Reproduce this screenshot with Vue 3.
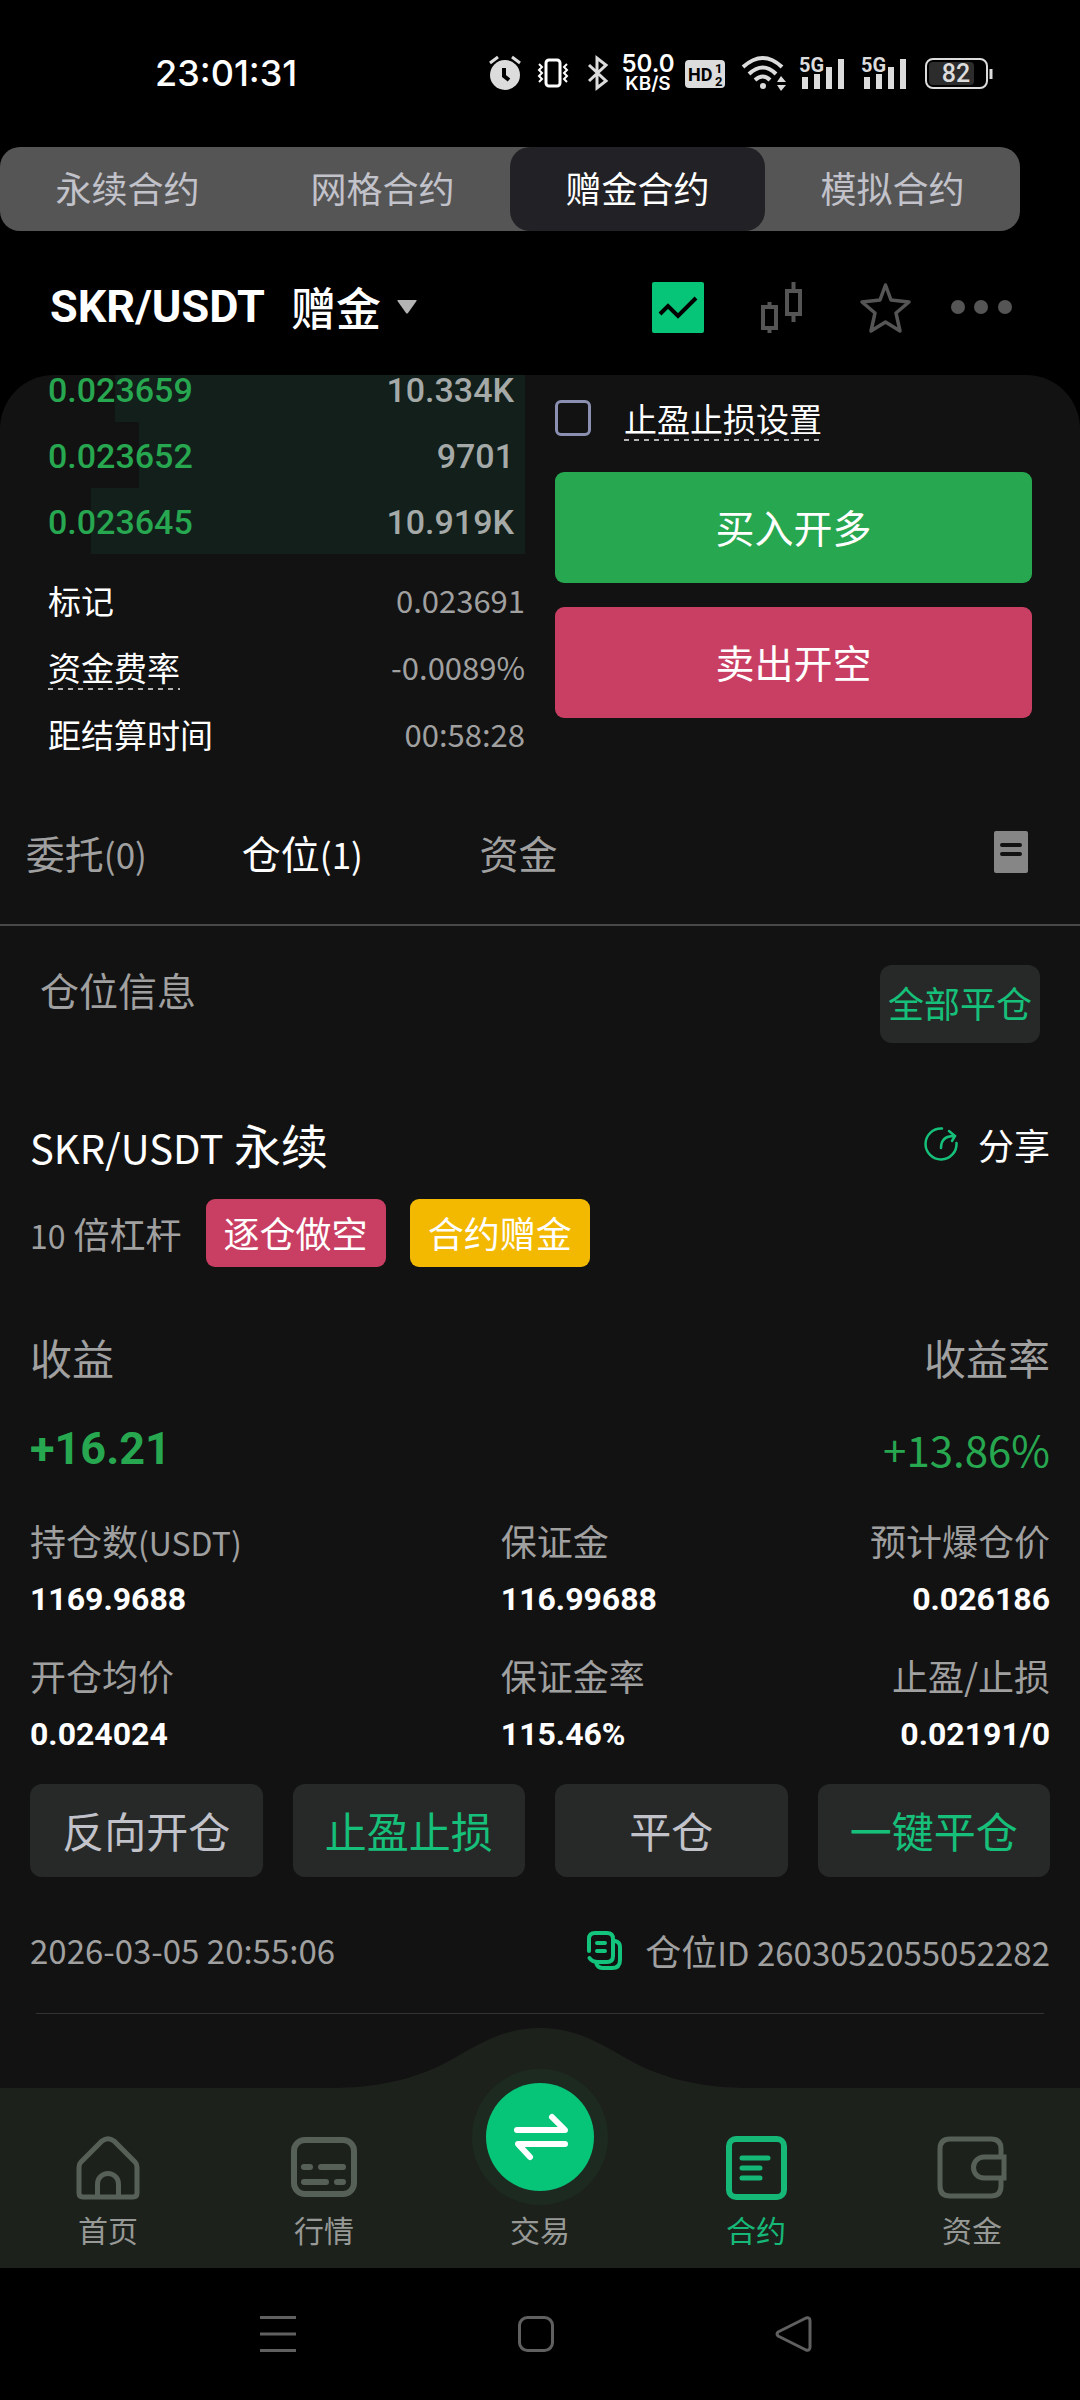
<template>
    <div class="app">
        <!-- Phone status bar -->
        <div class="status-bar">
            <span class="clock">23:01:31</span>
            <div class="status-icons">
                <svg width="32" height="34" viewBox="0 0 32 34">
                    <circle cx="16" cy="19" r="15" fill="#dcdcdc" />
                    <path d="M1 7 9 1M31 7 23 1" stroke="#dcdcdc" stroke-width="3" />
                    <path d="M15 12V20L20 24" fill="none" stroke="#000" stroke-width="4" />
                </svg>
                <svg width="36" height="34" viewBox="0 0 36 34" fill="none" stroke="#fff">
                    <rect x="11" y="4" width="14" height="26" rx="3" stroke-width="3" />
                    <path d="M4 8 7 11 4 14 7 17 4 20 7 23 4 26M32 8 29 11 32 14 29 17 32 20 29 23 32 26" stroke-width="2" />
                </svg>
                <svg width="26" height="34" viewBox="0 0 26 34" fill="none" stroke="#dcdcdc" stroke-width="3">
                    <path d="M4 9 21 25 12 32V2L21 9 4 25" />
                </svg>
                <div class="speed">
                    <span class="speed-value">50.0</span>
                    <span class="speed-unit">KB/S</span>
                </div>
                <svg width="40" height="34" viewBox="0 0 40 34">
                    <rect x="0" y="4" width="40" height="28" rx="4" fill="#dcdcdc" />
                    <text x="3" y="25" class="hd-text">HD</text>
                    <text x="30" y="17" class="hd-small">1</text>
                    <text x="30" y="30" class="hd-small">2</text>
                </svg>
                <svg width="46" height="36" viewBox="0 0 46 36" fill="none" stroke="#dcdcdc" stroke-width="4">
                    <path d="M4 12Q24-6 43 12M10 19Q24 6 37 19M16 25Q24 18 31 25" />
                    <circle cx="24" cy="31" r="3" fill="#dcdcdc" stroke="none" />
                    <path d="M38 27 42 21 47 27ZM38 30H47L42 36Z" fill="#dcdcdc" stroke="none" />
                </svg>
                <svg v-for="n in 2" :key="n" width="48" height="34" viewBox="0 0 48 34">
                    <text x="0" y="16" class="net-text">5G</text>
                    <path d="M6 21V33M18 18V33M30 11V33M42 3V33" stroke="#dcdcdc" stroke-width="6" />
                </svg>
                <svg width="70" height="34" viewBox="0 0 70 34">
                    <rect x="3" y="3" width="61" height="29" rx="7" fill="none" stroke="#dcdcdc" stroke-width="2" />
                    <rect x="6" y="6" width="45" height="23" rx="4" fill="#2c2c2c" />
                    <path d="M68 13V23" stroke="#dcdcdc" stroke-width="3" />
                    <text x="33" y="26" text-anchor="middle" class="battery-text">82</text>
                </svg>
            </div>
        </div>

        <!-- Contract type switch -->
        <div class="type-tabs">
            <button
                v-for="type in types"
                :key="type"
                class="type-tab"
                :class="{ active: type === currentType }"
                @click="currentType = type"
            >{{ type }}</button>
        </div>

        <header class="pair-header">
            <button class="pair">
                <span class="pair-name">SKR/USDT</span>
                <span class="pair-kind">赠金</span>
                <svg width="20" height="14" viewBox="0 0 20 14">
                    <path d="M1 0H19Q20 0 19.500 1L11 13Q10 14 9 13L.5 1Q0 0 1 0Z" fill="#b4b4b4" />
                </svg>
            </button>
            <div class="pair-tools">
                <button aria-label="走势">
                    <svg width="52" height="51" viewBox="0 0 52 51">
                        <rect width="52" height="51" rx="2" fill="#06c478" />
                        <path d="M8 32 16 24 26 34 44 16" fill="none" stroke="#000" stroke-width="4" />
                    </svg>
                </button>
                <button aria-label="K线">
                    <svg width="76" height="51" viewBox="-17 0 76 51" fill="none" stroke="#555" stroke-width="4">
                        <path d="M2 25H15V46H2ZM8.500 20V25M8.500 46V51M26 9H39V32H26ZM32.500 0V9M32.500 32V40" />
                    </svg>
                </button>
                <button aria-label="收藏">
                    <svg width="51" height="51" viewBox="0 0 51 51" fill="none" stroke="#555" stroke-width="3.500" stroke-linejoin="round">
                        <path d="M25.500 3 31 18 49 20 36 31 40 49 25.500 40 11 49 15 31 2 20 20 18Z" />
                    </svg>
                </button>
                <button aria-label="更多">
                    <svg width="61" height="51" viewBox="0 0 61 51" fill="#555">
                        <circle cx="7" cy="25" r="7" />
                        <circle cx="30" cy="25" r="7" />
                        <circle cx="54" cy="25" r="7" />
                    </svg>
                </button>
            </div>
        </header>

        <main class="panel">
            <section class="trade">
                <div class="trade-left">
                    <table class="book">
                        <tbody>
                            <tr v-for="row in bids" :key="row.price" :style="{ '--depth': row.depth }">
                                <td class="price">{{ row.price }}</td>
                                <td class="amount">{{ row.amount }}</td>
                            </tr>
                        </tbody>
                    </table>
                    <div class="market-info">
                        <div class="info-row" v-for="item in marketInfo" :key="item.label">
                            <span :class="{ dashed: item.hint }">{{ item.label }}</span>
                            <span class="info-value">{{ item.value }}</span>
                        </div>
                    </div>
                </div>
                <div class="trade-right">
                    <div class="tpsl">
                        <input id="tpsl" type="checkbox" v-model="tpsl" />
                        <label for="tpsl" class="dashed">止盈止损设置</label>
                    </div>
                    <button class="order-btn buy">买入开多</button>
                    <button class="order-btn sell">卖出开空</button>
                </div>
            </section>

            <div class="list-tabs">
                <button
                    v-for="(tab, index) in listTabs"
                    :key="tab.name"
                    class="list-tab"
                    :class="{ active: index === currentTab }"
                    @click="currentTab = index"
                >{{ tab.name }}<span v-if="tab.count" class="latin">{{ tab.count }}</span></button>
                <button class="history" aria-label="历史记录">
                    <svg width="34" height="42" viewBox="0 0 34 42">
                        <rect width="34" height="42" rx="2" fill="#868686" />
                        <path d="M8 14H26M8 23H26" stroke="#121212" stroke-width="4" stroke-linecap="round" />
                    </svg>
                </button>
            </div>

            <div class="list-head">
                <h2>仓位信息</h2>
                <button class="close-all">全部平仓</button>
            </div>

            <article class="position">
                <div class="position-title">
                    <h3><span class="latin">SKR/USDT</span> 永续</h3>
                    <button class="share">
                        <svg width="34" height="34" viewBox="0 0 34 34" fill="none" stroke="#16c07a" stroke-width="2.500" stroke-linecap="round">
                            <path d="M18 1.500A15.500 15.500 0 1 0 32.500 16M17 21C17 13 21 9 30 9M25 4 31 9 28 14" />
                        </svg>
                        分享
                    </button>
                </div>
                <div class="tags">
                    <span class="leverage"><span class="latin">10</span> 倍杠杆</span>
                    <span class="tag short">逐仓做空</span>
                    <span class="tag bonus">合约赠金</span>
                </div>

                <div class="profit-labels">
                    <span>收益</span>
                    <span>收益率</span>
                </div>
                <div class="profit-values">
                    <strong>+16.21</strong>
                    <span>+13.86%</span>
                </div>

                <div class="stats">
                    <div class="stat" v-for="stat in stats" :key="stat.label">
                        <div class="stat-label">{{ stat.label }}<span v-if="stat.unit" class="latin">{{ stat.unit }}</span></div>
                        <div class="stat-value">{{ stat.value }}</div>
                    </div>
                </div>

                <div class="actions">
                    <button>反向开仓</button>
                    <button class="green">止盈止损</button>
                    <button>平仓</button>
                    <button class="green">一键平仓</button>
                </div>

                <div class="position-foot">
                    <time class="latin">2026-03-05 20:55:06</time>
                    <div class="position-id">
                        <button aria-label="复制">
                            <svg width="35" height="39" viewBox="0 0 35 39" fill="none" stroke="#12c47c" stroke-width="4" stroke-linecap="round">
                                <path d="M2 20V8Q2 2 8 2H20Q26 2 26 8V25Q26 31 20 31H11Q5 31 2.500 27" />
                                <path d="M28 10Q33 11 33 16V29Q33 37 25 37H16Q11 37 9.500 33M10 12H18M10 20H18" />
                            </svg>
                        </button>
                        <span>仓位<span class="latin">ID 2603052055052282</span></span>
                    </div>
                </div>
            </article>
        </main>

        <nav class="bottom-nav">
            <svg class="nav-bg" viewBox="0 0 1080 240" preserveAspectRatio="none">
                <path d="M0 60H330C375 60 415 52 451 32C480 15 505 0 540 0C575 0 600 15 629 32C665 52 705 60 750 60H1080V240H0Z" fill="#1d211c" />
            </svg>
            <a href="#" class="nav-item">
                <svg width="64" height="64" viewBox="0 0 64 64" fill="none" stroke="#576056" stroke-width="5">
                    <path d="M3 31Q3 28 5 26L26 5Q32 .5 38 5L59 26Q61 28 61 31V57Q61 61 57 61H7Q3 61 3 57Z" />
                    <path d="M21.500 60V48A10.500 10.500 0 0 1 42.500 48V60" />
                </svg>
                首页
            </a>
            <a href="#" class="nav-item">
                <svg width="68" height="64" viewBox="0 0 68 64" fill="none" stroke="#576056" stroke-width="6">
                    <rect x="4" y="4" width="60" height="54" rx="11" />
                    <path d="M14 31H20M31 31H53M14 46H36M47 46H53" stroke-linecap="round" />
                </svg>
                行情
            </a>
            <a href="#" class="nav-item">
                <svg class="trade-icon" width="136" height="136" viewBox="0 0 136 136">
                    <circle cx="68" cy="68" r="68" fill="#1d2a1f" />
                    <circle cx="68" cy="68" r="54" fill="#06c478" />
                    <path d="M45 61H93L80 48M93 75H46L58 88" fill="none" stroke="#fff" stroke-width="6" stroke-linecap="round" stroke-linejoin="round" />
                </svg>
                交易
            </a>
            <a href="#" class="nav-item active">
                <svg width="62" height="64" viewBox="0 0 62 64" fill="none" stroke="#16b878" stroke-width="6">
                    <rect x="4" y="3" width="55" height="58" rx="7" />
                    <path d="M17 22H43M17 32H35M17 42H35" stroke-width="5" stroke-linecap="round" />
                </svg>
                合约
            </a>
            <a href="#" class="nav-item">
                <svg width="70" height="64" viewBox="0 0 70 64" fill="none" stroke="#576056" stroke-width="5">
                    <path d="M64 22V13Q64 3 54 3H13Q3 3 3 13V50Q3 60 13 60H54Q64 60 64 50V42" />
                    <path d="M67 21H47A10.500 10.500 0 0 0 47 42H67Z" />
                </svg>
                资金
            </a>
        </nav>

        <div class="system-nav">
            <button aria-label="菜单">
                <svg width="36" height="36" viewBox="0 0 36 36" stroke="#606060" stroke-width="3">
                    <path d="M0 1.500H36M0 18H36M0 34.500H36" />
                </svg>
            </button>
            <button aria-label="主页">
                <svg width="36" height="36" viewBox="0 0 36 36" fill="none" stroke="#606060" stroke-width="3">
                    <rect x="1.500" y="1.500" width="33" height="33" rx="8" />
                </svg>
            </button>
            <button aria-label="返回">
                <svg width="36" height="36" viewBox="0 0 36 36" fill="none" stroke="#606060" stroke-width="3" stroke-linejoin="round">
                    <path d="M2 16 30 2Q34 1 34 5V31Q34 35 30 34L2 20Q0 18 2 16Z" />
                </svg>
            </button>
        </div>
    </div>
</template>

<script setup>
import { ref } from "vue";

const types = ["永续合约", "网格合约", "赠金合约", "模拟合约"];
const currentType = ref("赠金合约");

const bids = ref([
    { price: "0.023659", amount: "10.334K", depth: "86%" },
    { price: "0.023652", amount: "9701", depth: "81%" },
    { price: "0.023645", amount: "10.919K", depth: "91%" }
]);

const marketInfo = ref([
    { label: "标记", value: "0.023691" },
    { label: "资金费率", value: "-0.0089%", hint: true },
    { label: "距结算时间", value: "00:58:28" }
]);

const tpsl = ref(false);

const listTabs = [
    { name: "委托", count: "(0)" },
    { name: "仓位", count: "(1)" },
    { name: "资金" }
];
const currentTab = ref(1);

const stats = ref([
    { label: "持仓数", unit: "(USDT)", value: "1169.9688" },
    { label: "保证金", value: "116.99688" },
    { label: "预计爆仓价", value: "0.026186" },
    { label: "开仓均价", value: "0.024024" },
    { label: "保证金率", value: "115.46%" },
    { label: "止盈/止损", value: "0.02191/0" }
]);
</script>

<style>
body {
    background: #000;
}
</style>

<style scoped>
.app {
    background: #000;
    color: #fff;
    font-family: "Noto Sans CJK SC", sans-serif;
    font-size: 36px;
}

button {
    padding: 0;
    border: none;
    background: none;
    color: inherit;
    font: inherit;
    cursor: pointer;
}

svg {
    display: block;
    flex-shrink: 0;
    overflow: visible;
}

h2, h3 {
    margin: 0;
    font-weight: 400;
}

.latin {
    font-size: 32px;
    line-height: 1;
}

/* Status bar */
.status-bar {
    display: flex;
    justify-content: space-between;
    align-items: center;
    height: 147px;
    padding: 0 87px 2px 155px;
    box-sizing: border-box;
    font-family: Inter, sans-serif;
}

.clock {
    font-size: 36px;
    font-weight: 500;
}

.status-icons {
    display: flex;
    align-items: center;
    gap: 14px;
}

.speed {
    display: flex;
    flex-direction: column;
    align-items: center;
    width: 46px;
    font-weight: 600;
}

.speed-value {
    font-size: 24px;
    line-height: 22px;
}

.speed-unit {
    font-size: 19px;
    line-height: 18px;
}

.hd-text {
    font: 700 18px Roboto, sans-serif;
}

.hd-small {
    font: 700 13px Roboto, sans-serif;
}

.net-text {
    font: 700 20px Roboto, sans-serif;
    fill: #dcdcdc;
}

.battery-text {
    font: 500 25px Roboto, sans-serif;
    fill: #dcdcdc;
}

/* Contract type switch */
.type-tabs {
    display: flex;
    margin-right: 60px;
    border-radius: 20px;
    background: #555;
}

.type-tab {
    flex: 1;
    height: 84px;
    padding-bottom: 4px;
    border-radius: 20px;
    color: #c2c2ca;
}

.type-tab.active {
    background: #222226;
    color: #fff;
}

/* Pair header */
.pair-header {
    display: flex;
    justify-content: space-between;
    align-items: center;
    height: 144px;
    padding: 8px 68px 0 50px;
    box-sizing: border-box;
}

.pair {
    display: flex;
    align-items: center;
    font-weight: 500;
}

.pair-name {
    font-family: Roboto, sans-serif;
    font-size: 45px;
    font-weight: 700;
    line-height: 60px;
}

.pair-kind {
    margin: 0 16px 0 26px;
    font-size: 45px;
    line-height: 60px;
}

.pair-tools {
    display: flex;
    align-items: center;
    gap: 40px;
}

.panel {
    overflow: hidden;
    padding-bottom: 14px;
    border-radius: 54px 54px 0 0;
    background: #121212;
}

/* Order book and order form */
.trade {
    display: grid;
    grid-template-columns: 1fr 1fr;
    gap: 30px;
    padding: 0 48px;
    font-size: 33px;
}

.book {
    width: 100%;
    margin-top: -19px;
    border-collapse: collapse;
    font-family: Roboto, sans-serif;
    font-size: 34px;
    font-weight: 500;
}

.book tr {
    height: 66px;
    background: linear-gradient(#121f1b, #121f1b) right / var(--depth) 100% no-repeat;
}

.book td {
    padding: 2px 0 0;
}

.price {
    color: #27a750;
}

.book .amount {
    padding-right: 11px;
    color: #a5aaa8;
    text-align: right;
}

.market-info {
    margin-top: 12px;
    padding-bottom: 2px;
}

.info-row {
    display: flex;
    justify-content: space-between;
    align-items: center;
    height: 67px;
}

.info-value {
    color: #a0a0a0;
    font-size: 31px;
}

.dashed {
    line-height: 46px;
    background: repeating-linear-gradient(90deg, #b4b4b4 0 5px, transparent 5px 10px) bottom / 100% 2px no-repeat;
}

.tpsl {
    display: flex;
    align-items: center;
    gap: 33px;
    height: 46px;
    margin: 20px 0 31px;
}

.tpsl input {
    appearance: none;
    width: 36px;
    height: 36px;
    margin: 0;
    border: 3px solid #8b90b2;
    border-radius: 6px;
}

.tpsl input:checked {
    background: #06c478;
}

.order-btn {
    display: block;
    width: 100%;
    height: 111px;
    margin-bottom: 24px;
    padding-bottom: 4px;
    border-radius: 9px;
    font-size: 39px;
}

.buy {
    background: #27a750;
}

.sell {
    background: #c93f63;
}

/* List tabs */
.list-tabs {
    display: flex;
    align-items: center;
    height: 143px;
    margin-top: 14px;
    padding-bottom: 4px;
    border-bottom: 2px solid #484848;
    box-sizing: border-box;
}

.list-tab {
    width: 20%;
    color: #a0a0a0;
    font-size: 39px;
}

.list-tab:first-child {
    margin-left: -2%;
}

.list-tab .latin {
    font-size: 35px;
}

.list-tab.active {
    color: #fff;
}

.history {
    margin: 0 52px 0 auto;
}

.list-head {
    display: flex;
    justify-content: space-between;
    align-items: flex-start;
    padding: 39px 40px 0;
}

.list-head h2 {
    color: #a0a0a0;
    font-size: 39px;
    line-height: 48px;
}

.close-all {
    height: 78px;
    padding: 0 8px 4px;
    border-radius: 12px;
    background: #272928;
    color: #16c07a;
}

/* Position card */
.position {
    padding: 71px 30px 0;
}

.position-title,
.profit-labels,
.profit-values,
.position-foot {
    display: flex;
    justify-content: space-between;
    align-items: center;
}

.position-title h3 {
    font-size: 47px;
    line-height: 60px;
}

.position-title .latin {
    font-size: 40px;
}

.share {
    display: flex;
    align-items: center;
    gap: 20px;
}

.tags {
    display: flex;
    align-items: center;
    gap: 24px;
    margin-top: 25px;
}

.leverage {
    color: #a0a0a0;
}

.tag {
    padding: 0 18px 2px;
    border-radius: 9px;
    line-height: 66px;
}

.tag.short {
    background: #c93f63;
}

.tag.bonus {
    background: #f2b900;
}

.profit-labels {
    margin-top: 60px;
    color: #a0a0a0;
    font-size: 42px;
    line-height: 60px;
}

.profit-values {
    margin-top: 32px;
    color: #27a750;
    font-size: 42px;
    line-height: 60px;
}

.profit-values strong {
    font-family: Roboto, sans-serif;
    font-size: 45px;
}

.stats {
    display: grid;
    grid-template-columns: 12fr 7fr 7fr;
    row-gap: 28px;
    margin-top: 34px;
}

.stat:nth-child(3n) {
    text-align: right;
}

.stat-label {
    color: #a0a0a0;
    line-height: 54px;
}

.stat-value {
    margin-top: 11px;
    font-family: Roboto, sans-serif;
    font-size: 32px;
    font-weight: 700;
    line-height: 42px;
}

.actions {
    display: grid;
    grid-template-columns: repeat(4, 1fr);
    gap: 30px;
    margin-top: 29px;
}

.actions button {
    height: 93px;
    padding-bottom: 2px;
    border-radius: 12px;
    background: #272928;
    color: #c2c2ca;
    font-size: 42px;
}

.actions .green {
    color: #16c07a;
}

.position-foot {
    margin: 49px 0 39px;
    color: #a0a0a0;
    line-height: 48px;
}

.position-foot .latin {
    font-size: 33px;
}

.position-id {
    display: flex;
    align-items: center;
    gap: 23px;
}

.position::after {
    content: "";
    display: block;
    height: 1px;
    margin: 0 6px;
    background: #333;
}

/* Bottom navigation */
.bottom-nav {
    display: flex;
    position: relative;
    height: 240px;
    background: #121212;
}

.nav-bg {
    position: absolute;
    inset: 0;
    width: 100%;
    height: 100%;
}

.nav-item {
    display: flex;
    flex: 1;
    flex-direction: column;
    justify-content: flex-end;
    align-items: center;
    gap: 8px;
    position: relative;
    padding-bottom: 18px;
    color: #969996;
    font-size: 30px;
    line-height: 42px;
    text-decoration: none;
}

.nav-item.active {
    color: #16b878;
}

.trade-icon {
    margin-bottom: -5px;
}

.system-nav {
    display: grid;
    grid-template-columns: repeat(3, 1fr);
    justify-items: center;
    align-items: center;
    height: 132px;
    padding: 0 157px 0 149px;
}
</style>
